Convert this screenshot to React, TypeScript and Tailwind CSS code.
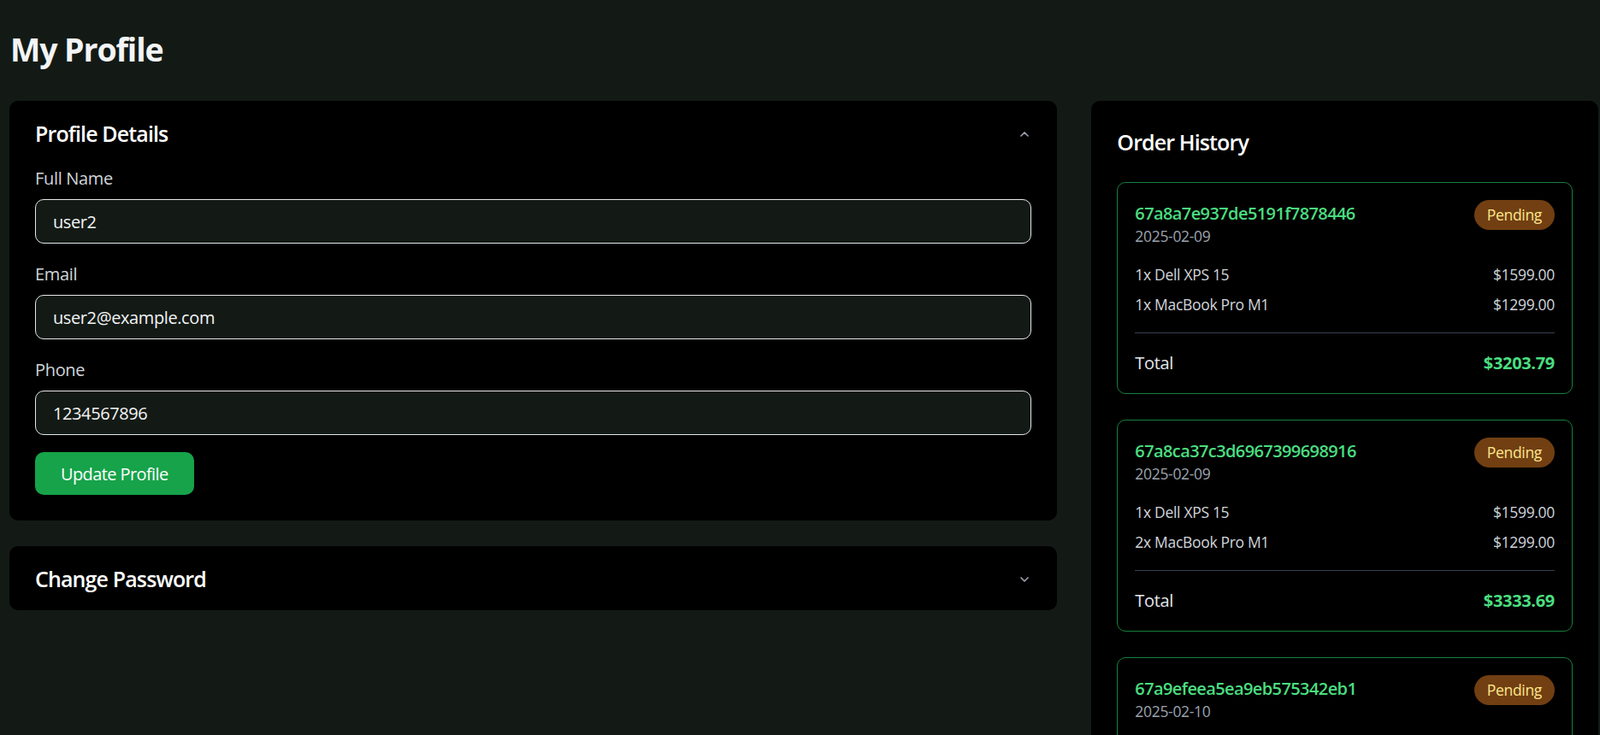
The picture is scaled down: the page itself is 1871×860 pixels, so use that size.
import { ChevronDown, ChevronUp } from "lucide-react";

type OrderItem = { qty: number; name: string; price: string };
type Order = { id: string; date: string; status: string; items: OrderItem[]; total: string };

const orders: Order[] = [
  {
    id: "67a8a7e937de5191f7878446",
    date: "2025-02-09",
    status: "Pending",
    items: [
      { qty: 1, name: "Dell XPS 15", price: "$1599.00" },
      { qty: 1, name: "MacBook Pro M1", price: "$1299.00" },
    ],
    total: "$3203.79",
  },
  {
    id: "67a8ca37c3d6967399698916",
    date: "2025-02-09",
    status: "Pending",
    items: [
      { qty: 1, name: "Dell XPS 15", price: "$1599.00" },
      { qty: 2, name: "MacBook Pro M1", price: "$1299.00" },
    ],
    total: "$3333.69",
  },
  {
    id: "67a9efeea5ea9eb575342eb1",
    date: "2025-02-10",
    status: "Pending",
    items: [{ qty: 1, name: "Dell XPS 15", price: "$1599.00" }],
    total: "$1599.00",
  },
];

const fields = [
  { label: "Full Name", value: "user2", type: "text" },
  { label: "Email", value: "user2@example.com", type: "email" },
  { label: "Phone", value: "1234567896", type: "tel" },
];

function OrderCard({ order }: { order: Order }) {
  return (
    <div className="rounded-[10px] border border-[#15803d] p-[20px]">
      <div className="mb-[20px] flex items-start justify-between">
        <div>
          <p className="pt-[1px] text-[20px] leading-[29px] font-semibold tracking-[-0.03em] text-[#4ade80]">{order.id}</p>
          <p className="text-[17.5px] leading-[25px] text-[#9ca3af]">{order.date}</p>
        </div>
        <span className="rounded-full bg-[#713f12] px-[15px] py-[5px] text-[17.5px] leading-[25px] text-[#fde68a]">
          {order.status}
        </span>
      </div>
      <div className="flex flex-col gap-[10px] text-[17.5px] leading-[25px] text-[#d1d5db]">
        {order.items.map((item, i) => (
          <div key={i} className="flex justify-between">
            <span>
              {item.qty}x {item.name}
            </span>
            <span>{item.price}</span>
          </div>
        ))}
      </div>
      <div className="mt-[20px] flex justify-between border-t border-[#374151] pt-[20px] text-[20px] leading-[30px]">
        <span className="text-[#e5e7eb]">Total</span>
        <span className="font-bold text-[#4ade80]">{order.total}</span>
      </div>
    </div>
  );
}

export default function App() {
  return (
    <div className="min-h-screen bg-[#131a15] pt-[35px] pr-[2px] pl-[11px] font-['Segoe_UI','Open_Sans',sans-serif] tracking-[-0.02em] text-white">
      <h1 className="mb-[38px] pl-[1px] text-[37.5px] leading-[45px] font-bold tracking-[-0.03em] text-[#f3f4f6]">My Profile</h1>

      <div className="grid grid-cols-3 gap-[40px]">
        <div className="col-span-2 flex flex-col gap-[30px]">
          <div className="rounded-[10px] bg-black">
            <div className="flex items-center justify-between px-[30px] pt-[21px] pb-[19px]">
              <h2 className="text-[25px] leading-[35px] font-semibold tracking-[-0.035em]">Profile Details</h2>
              <ChevronUp size={16} strokeWidth={2.5} className="text-[#9ca3af]" />
            </div>
            <div className="px-[30px] pb-[30px]">
              {fields.map((f) => (
                <div key={f.label} className="mb-[20px]">
                  <label className="mb-[10px] block pt-[1px] text-[20px] leading-[29px] text-[#d1d5db]">{f.label}</label>
                  <input
                    type={f.type}
                    defaultValue={f.value}
                    className="w-full rounded-[10px] border border-[#e5e7eb] bg-[#131a15] px-[20px] pt-[11px] pb-[9px] text-[20px] leading-[30px] tracking-[-0.02em] text-[#f3f4f6] outline-none"
                  />
                </div>
              ))}
              <button className="rounded-[10px] bg-[#16a34a] px-[30px] pt-[11px] pb-[9px] text-[20px] leading-[30px] tracking-[-0.03em] text-white">
                Update Profile
              </button>
            </div>
          </div>

          <div className="rounded-[10px] bg-black">
            <div className="flex items-center justify-between px-[30px] pt-[21px] pb-[19px]">
              <h2 className="text-[25px] leading-[35px] font-semibold tracking-[-0.035em]">Change Password</h2>
              <ChevronDown size={16} strokeWidth={2.5} className="text-[#9ca3af]" />
            </div>
          </div>
        </div>

        <div className="rounded-[10px] bg-black p-[30px]">
          <h2 className="mb-[30px] pt-[1px] text-[25px] leading-[34px] font-semibold tracking-[-0.035em]">Order History</h2>
          <div className="flex flex-col gap-[30px]">
            {orders.map((o) => (
              <OrderCard key={o.id} order={o} />
            ))}
          </div>
        </div>
      </div>
    </div>
  );
}
